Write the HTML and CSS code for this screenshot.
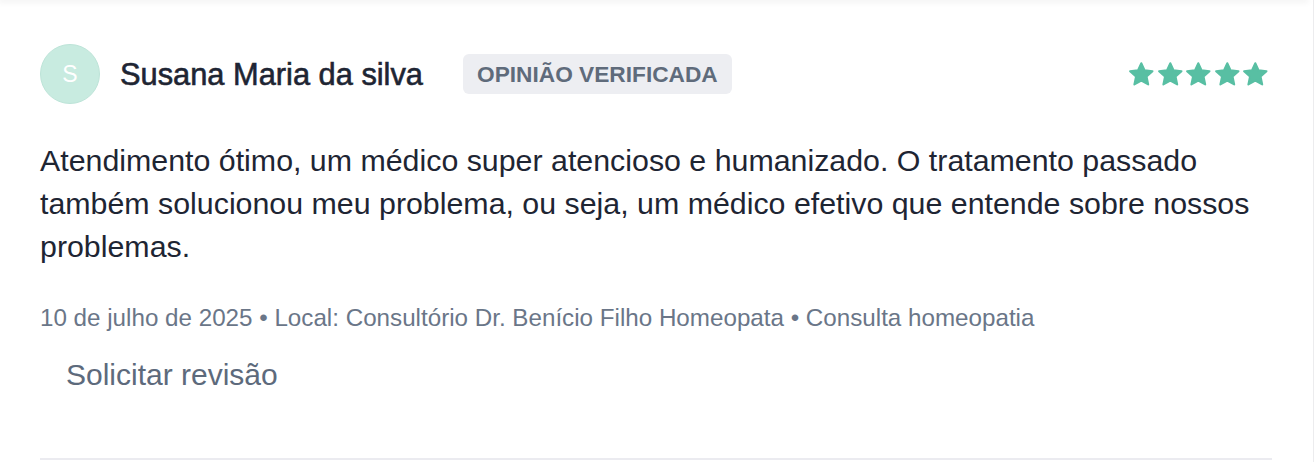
FILE: index.html
```html
<!DOCTYPE html>
<html lang="pt-BR">
<head>
<meta charset="utf-8">
<title>Opinião</title>
<link rel="stylesheet" href="styles.css">
</head>
<body>
<div class="page">
  <div class="prev-edge"></div>
  <article class="review">
    <header class="review-head">
      <div class="avatar">S</div>
      <h3 class="author">Susana Maria da silva</h3>
      <span class="badge">OPINIÃO VERIFICADA</span>
      <div class="stars" aria-label="5 estrelas">
        <svg class="star" viewBox="0 0 24 24"><path d="M12 2.5l2.8 6 6.6.75-4.95 4.5 1.35 6.6L12 17.1l-5.8 3.25 1.35-6.6L2.6 9.25l6.6-.75z"/></svg>
        <svg class="star" viewBox="0 0 24 24"><path d="M12 2.5l2.8 6 6.6.75-4.95 4.5 1.35 6.6L12 17.1l-5.8 3.25 1.35-6.6L2.6 9.25l6.6-.75z"/></svg>
        <svg class="star" viewBox="0 0 24 24"><path d="M12 2.5l2.8 6 6.6.75-4.95 4.5 1.35 6.6L12 17.1l-5.8 3.25 1.35-6.6L2.6 9.25l6.6-.75z"/></svg>
        <svg class="star" viewBox="0 0 24 24"><path d="M12 2.5l2.8 6 6.6.75-4.95 4.5 1.35 6.6L12 17.1l-5.8 3.25 1.35-6.6L2.6 9.25l6.6-.75z"/></svg>
        <svg class="star" viewBox="0 0 24 24"><path d="M12 2.5l2.8 6 6.6.75-4.95 4.5 1.35 6.6L12 17.1l-5.8 3.25 1.35-6.6L2.6 9.25l6.6-.75z"/></svg>
      </div>
    </header>
    <p class="review-text">Atendimento ótimo, um médico super atencioso e humanizado. O tratamento passado também solucionou meu problema, ou seja, um médico efetivo que entende sobre nossos problemas.</p>
    <p class="review-meta">10 de julho de 2025 • Local: Consultório Dr. Benício Filho Homeopata • Consulta homeopatia</p>
    <button class="review-action" type="button">Solicitar revisão</button>
  </article>
</div>
</body>
</html>
```

FILE: styles.css
```css
* { box-sizing: border-box; }

html, body {
  margin: 0;
  padding: 0;
  background: #ffffff;
}

body {
  font-family: "Liberation Sans", Arial, sans-serif;
  color: #1e2533;
}

.page {
  width: 1314px;
  height: 462px;
  border-right: 1px solid #ececee;
  overflow: hidden;
  position: relative;
}

.prev-edge {
  height: 0;
  margin-right: 6px;
  box-shadow: 0 0 6px 2px rgba(0, 0, 0, 0.07);
}

.review {
  margin: 0 41px 0 40px;
  padding-top: 44px;
  border-bottom: 2px solid #ebebf0;
  height: 460px;
}

.review-head {
  display: flex;
  align-items: center;
  height: 60px;
}

.avatar {
  width: 60px;
  height: 60px;
  border-radius: 50%;
  background: #c8ebe0;
  border: 1px solid #bde4d8;
  color: #ffffff;
  font-size: 23px;
  display: flex;
  align-items: center;
  justify-content: center;
  flex-shrink: 0;
}

.author {
  margin: 0 0 0 20px;
  font-size: 30.8px;
  font-weight: 400;
  -webkit-text-stroke: 0.6px #1e2533;
  color: #1e2533;
  line-height: 1;
  padding-top: 2px;
}

.badge {
  margin-left: 40px;
  height: 40px;
  padding: 0 14px;
  border-radius: 6px;
  background: #edeef2;
  color: #5f6b7b;
  font-weight: 700;
  font-size: 22.7px;
  display: flex;
  align-items: center;
  padding-top: 1px;
}

.stars {
  margin-left: auto;
  margin-right: 2px;
  display: flex;
}

.star {
  width: 28.6px;
  height: 29px;
  fill: #58bfa3;
  stroke: #58bfa3;
  stroke-width: 1.7;
  stroke-linejoin: round;
}

.review-text {
  margin: 35px 0 0;
  font-size: 30.35px;
  line-height: 43px;
  color: #1e2533;
}

.review-meta {
  margin: 36px 0 0;
  font-size: 24.2px;
  line-height: 28px;
  color: #6a7688;
}

.review-action {
  margin: 23px 0 0;
  padding: 0 26px;
  border: 0;
  background: transparent;
  font-family: inherit;
  font-size: 30px;
  line-height: 40px;
  color: #5d6a7c;
  cursor: pointer;
}
```
